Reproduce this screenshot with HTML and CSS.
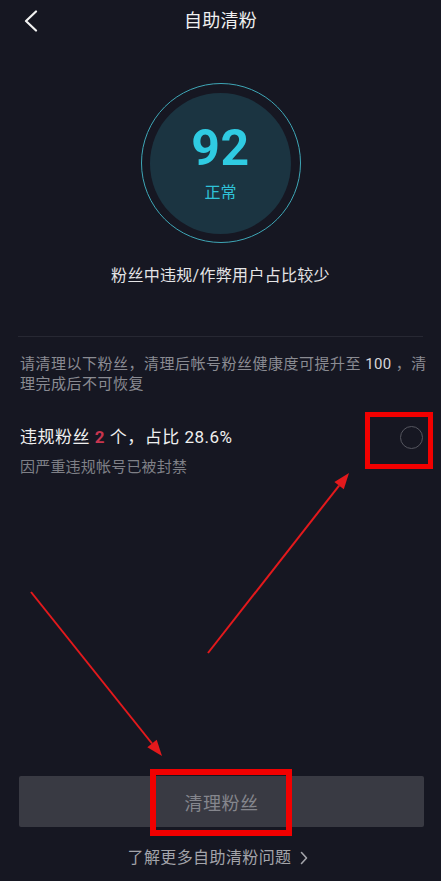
FILE: index.html
```html
<!DOCTYPE html>
<html lang="zh-CN">
<head>
<meta charset="utf-8">
<title>自助清粉</title>
<link rel="stylesheet" href="styles.css">
</head>
<body>
<div class="page">
  <header class="topbar">
    <div class="back">
      <svg width="14" height="22" viewBox="0 0 14 22"><path d="M12 1.5 L2 11 L12 20.5" fill="none" stroke="#f2f2f2" stroke-width="2.2" stroke-linecap="round" stroke-linejoin="round"/></svg>
    </div>
    <h1 class="title">自助清粉</h1>
    <div></div>
  </header>

  <section class="score">
    <div class="ring">
      <div class="disc">
        <div class="num">92</div>
        <div class="state">正常</div>
      </div>
    </div>
    <p class="caption">粉丝中违规/作弊用户占比较少</p>
  </section>

  <hr class="divider">

  <p class="notice">请清理以下粉丝，清理后帐号粉丝健康度可提升至 <span class="hl">100</span> ，清理完成后不可恢复</p>

  <div class="item">
    <div class="item-text">
      <div class="item-title">违规粉丝 <span class="count">2</span> 个，占比 28.6%</div>
      <div class="item-sub">因严重违规帐号已被封禁</div>
    </div>
    <span class="radio"></span>
  </div>

  <footer class="footer">
    <button class="clean-btn">清理粉丝</button>
    <a class="more">了解更多自助清粉问题<svg class="chev" width="8" height="14" viewBox="0 0 8 14"><path d="M1.5 1.5 L6.5 7 L1.5 12.5" fill="none" stroke="#a3a4aa" stroke-width="1.6" stroke-linecap="round" stroke-linejoin="round"/></svg></a>
  </footer>

  <svg class="annot" width="441" height="881" viewBox="0 0 441 881">
    <rect x="367.5" y="414.5" width="63" height="52" fill="none" stroke="#f20000" stroke-width="5"/>
    <rect x="153" y="772" width="136" height="61" fill="none" stroke="#f20000" stroke-width="6"/>
    <line x1="31" y1="592" x2="152" y2="743.5" stroke="#e3191c" stroke-width="2"/>
    <polygon points="162,756 147.3,747.2 156.7,739.8" fill="#e3191c"/>
    <line x1="208" y1="653" x2="339.1" y2="485.6" stroke="#e3191c" stroke-width="2"/>
    <polygon points="349,473 343.8,489.3 334.4,481.9" fill="#e3191c"/>
  </svg>
</div>
</body>
</html>
```

FILE: styles.css
```css
html, body {
  margin: 0;
  padding: 0;
  background: #161722;
}
body {
  font-family: Roboto, "Noto Sans CJK SC", "Noto Sans", sans-serif;
  color: #ececec;
}
.page {
  position: relative;
  width: 441px;
  height: 881px;
  display: flex;
  flex-direction: column;
  overflow: hidden;
}
.topbar {
  display: grid;
  grid-template-columns: 60px 1fr 60px;
  align-items: center;
  height: 42px;
}
.back {
  padding-left: 24px;
  display: flex;
  align-items: center;
}
.title {
  margin: 0;
  text-align: center;
  font-size: 18px;
  font-weight: 400;
  line-height: 42px;
  color: #f0f0f0;
  letter-spacing: 0.2px;
}
.score {
  display: flex;
  flex-direction: column;
  align-items: center;
  margin-top: 41px;
}
.ring {
  width: 160px;
  height: 160px;
  box-sizing: border-box;
  border: 1.5px solid #3ea6b6;
  border-radius: 50%;
  display: flex;
  align-items: center;
  justify-content: center;
}
.disc {
  width: 141px;
  height: 141px;
  border-radius: 50%;
  background: #1b3441;
  display: flex;
  flex-direction: column;
  align-items: center;
  box-sizing: border-box;
  padding-top: 30px;
}
.num {
  font-family: Roboto, "Noto Sans", sans-serif;
  font-weight: 700;
  font-size: 50px;
  line-height: 50px;
  color: #2fcbe2;
  letter-spacing: 0.5px;
}
.state {
  margin-top: 10px;
  font-size: 16px;
  line-height: 20px;
  color: #2fc2d8;
}
.caption {
  margin: 22px 0 0;
  font-size: 16px;
  line-height: 22px;
  color: #e4e4e6;
  letter-spacing: 0.3px;
}
.divider {
  margin: 49px 18px 0;
  border: 0;
  height: 1px;
  background: #272833;
}
.notice {
  margin: 17px 0 0;
  padding: 0 14px 0 20px;
  font-size: 15px;
  line-height: 20px;
  letter-spacing: 0.5px;
  color: #8a8b92;
}
.hl {
  color: #d6d6da;
  letter-spacing: 0.3px;
}
.item {
  display: flex;
  align-items: flex-start;
  justify-content: space-between;
  margin-top: 31px;
  padding: 0 18px 0 20px;
}
.item-title {
  font-size: 17px;
  line-height: 24px;
  color: #efefef;
  letter-spacing: 0.5px;
}
.count {
  color: #c8354f;
  font-weight: 700;
}
.item-sub {
  margin-top: 8px;
  font-size: 15px;
  line-height: 20px;
  color: #7f8087;
  letter-spacing: 0.2px;
}
.radio {
  width: 23px;
  height: 23px;
  box-sizing: border-box;
  border: 1.5px solid #55565f;
  border-radius: 50%;
  margin-top: 0.5px;
}
.footer {
  margin-top: auto;
  display: flex;
  flex-direction: column;
  align-items: center;
  padding: 0 17px 12px 19px;
}
.clean-btn {
  width: 100%;
  height: 51px;
  border: 0;
  border-radius: 2px;
  background: #393a43;
  color: #85868d;
  font-family: "Noto Sans CJK SC", sans-serif;
  font-size: 18px;
  letter-spacing: 0.5px;
}
.more {
  margin-top: 20px;
  margin-right: 8px;
  display: flex;
  align-items: center;
  gap: 8px;
  font-size: 16px;
  line-height: 22px;
  letter-spacing: 0.4px;
  color: #a3a4aa;
}
.annot {
  position: absolute;
  left: 0;
  top: 0;
  pointer-events: none;
}
```
